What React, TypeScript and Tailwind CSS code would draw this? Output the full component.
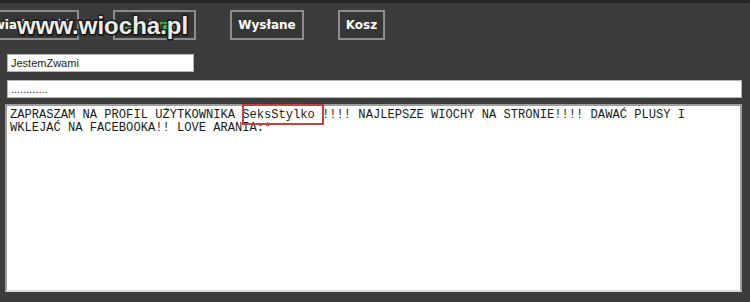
export default function App() {
  return (
    <div className="relative w-[750px] h-[302px] overflow-hidden bg-[#3c3c3c] border-t-[3px] border-[#262626] font-['Liberation_Sans',sans-serif]">
      {/* tab buttons */}
      <div className="flex gap-[34px] mt-[7px] -ml-[58px]">
        <button className="w-[137px] h-[30px] border-2 border-[#8c8c8c] bg-[#363636] text-white text-[12px] font-bold font-['DejaVu_Sans',sans-serif]">
          Nowa wiadomość
        </button>
        <button className="w-[83px] h-[30px] border-2 border-[#8c8c8c] bg-[#363636] text-[#3fcf44] text-[12px] font-bold font-['DejaVu_Sans',sans-serif]">
          Odebrane
        </button>
        <button className="w-[74px] h-[30px] border-2 border-[#8c8c8c] bg-[#363636] text-white text-[12px] font-bold font-['DejaVu_Sans',sans-serif]">
          Wysłane
        </button>
        <button className="w-[47px] h-[30px] border-2 border-[#8c8c8c] bg-[#363636] text-white text-[12px] font-bold font-['DejaVu_Sans',sans-serif]">
          Kosz
        </button>
      </div>

      <div className="mt-[14px] ml-[7px] w-[187px] h-[18px] bg-white border border-[#b5b5b5] px-[3px] text-[11px] leading-[16px] text-[#222]">
        JestemZwami
      </div>
      <div className="mt-[8px] ml-[7px] w-[735px] h-[18px] bg-white border border-[#b5b5b5] px-[3px] text-[11px] leading-[16px] text-[#222]">
        ............
      </div>

      <div className="mt-[6px] ml-[5px] w-[737px] h-[188px] bg-white border-2 border-[#9c9c9c] border-b-[#d8d8d8] px-[3px] pt-[3px] font-['Liberation_Mono',monospace] text-[12.1px] leading-[13px] text-[#1a1a1a] whitespace-pre-wrap">
        {"ZAPRASZAM NA PROFIL UŻYTKOWNIKA "}
        <span className="relative">
          SeksStylko
          <span className="absolute -top-[4px] -bottom-[3px] left-0 -right-[9px] border-2 border-[#c9403f]" />
        </span>
        {" !!!! NAJLEPSZE WIOCHY NA STRONIE!!!! DAWAĆ PLUSY I\nWKLEJAĆ NA FACEBOOKA!! LOVE ARANIA:*"}
      </div>

      {/* watermark */}
      <div className="absolute top-[11px] left-[17px] text-[24px] leading-none font-bold text-[#ececec] [-webkit-text-stroke:3px_#1e1e1e] [paint-order:stroke_fill] [text-shadow:1px_1px_2px_rgba(0,0,0,0.6)]">
        www.wiocha.pl
      </div>
    </div>
  )
}
